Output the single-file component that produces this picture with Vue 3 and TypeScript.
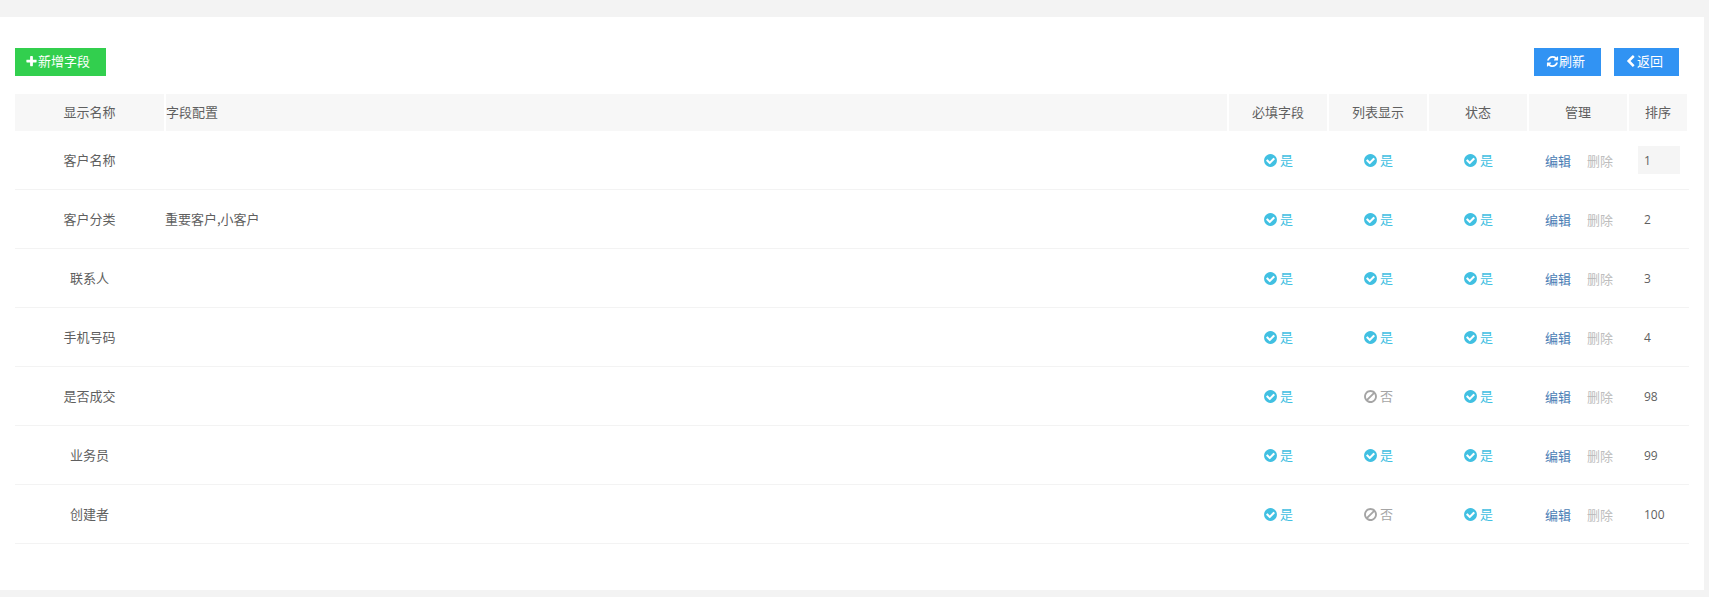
<script setup lang="ts">
interface Field {
  name: string
  config: string
  required: boolean
  listed: boolean
  enabled: boolean
  sort: number
}

const fields: Field[] = [
  { name: '客户名称', config: '', required: true, listed: true, enabled: true, sort: 1 },
  { name: '客户分类', config: '重要客户,小客户', required: true, listed: true, enabled: true, sort: 2 },
  { name: '联系人', config: '', required: true, listed: true, enabled: true, sort: 3 },
  { name: '手机号码', config: '', required: true, listed: true, enabled: true, sort: 4 },
  { name: '是否成交', config: '', required: true, listed: false, enabled: true, sort: 98 },
  { name: '业务员', config: '', required: true, listed: true, enabled: true, sort: 99 },
  { name: '创建者', config: '', required: true, listed: false, enabled: true, sort: 100 },
]

const checkPath =
  'M1412 734q0-28-18-46l-91-90q-19-19-45-19t-45 19l-408 407-226-226q-19-19-45-19t-45 19l-91 90q-18 18-18 46 0 27 18 45l362 362q19 19 45 19 27 0 46-19l543-543q18-18 18-45zm252 162q0 209-103 385.5t-279.5 279.5-385.5 103-385.5-103-279.5-279.5-103-385.5 103-385.5 279.5-279.5 385.5-103 385.5 103 279.5 279.5 103 385.5z'
const banPath =
  'M1440 893q0-161-87-295l-754 753q137 89 297 89 111 0 211.5-43.5t173.5-116.5 116-174.5 43-212.5zm-999 299l755-754q-135-91-300-91-148 0-273 73t-198 199-73 274q0 162 89 299zm1223-299q0 157-61 300t-163.5 246-245 164-298.5 61-298.5-61-245-164-163.5-246-61-300 61-299.5 163.5-245.5 245-164 298.5-61 298.5 61 245 164 163.5 245.5 61 299.5z'

function flags(f: Field) {
  return [f.required, f.listed, f.enabled]
}
</script>

<template>
  <div class="page">
    <div class="card">
      <div class="toolbar">
        <button class="btn green">
          <svg class="ico" viewBox="0 0 1792 1792"><path d="M1600 736v192q0 40-28 68t-68 28h-416v416q0 40-28 68t-68 28h-192q-40 0-68-28t-28-68v-416h-416q-40 0-68-28t-28-68v-192q0-40 28-68t68-28h416v-416q0-40 28-68t68-28h192q40 0 68 28t28 68v416h416q40 0 68 28t28 68z" /></svg>新增字段
        </button>
        <div class="toolbar-right">
          <button class="btn blue refresh">
            <svg class="ico" viewBox="0 0 1792 1792"><path d="M1639 1056q0 5-1 7-64 268-268 434.5t-478 166.5q-146 0-282.5-55t-243.5-157l-129 129q-19 19-45 19t-45-19-19-45v-448q0-26 19-45t45-19h448q26 0 45 19t19 45-19 45l-137 137q71 66 161 102t187 36q134 0 250-65t186-179q11-17 53-117 8-23 30-23h192q13 0 22.5 9.5t9.5 22.5zm25-800v448q0 26-19 45t-45 19h-448q-26 0-45-19t-19-45 19-45l138-138q-148-137-349-137-134 0-250 65t-186 179q-11 17-53 117-8 23-30 23h-199q-13 0-22.5-9.5t-9.5-22.5v-7q65-268 270-434.5t480-166.5q146 0 284 55.5t245 156.5l130-129q19-19 45-19t45 19 19 45z" /></svg>刷新
          </button>
          <button class="btn blue back">
            <svg class="ico" viewBox="0 0 1792 1792"><path d="M1427 301l-531 531 531 531q19 19 19 45t-19 45l-166 166q-19 19-45 19t-45-19l-742-742q-19-19-19-45t19-45l742-742q19-19 45-19t45 19l166 166q19 19 19 45t-19 45z" /></svg>返回
          </button>
        </div>
      </div>

      <div class="row head">
        <div class="th center"><span>显示名称</span></div>
        <div class="th"><span>字段配置</span></div>
        <div class="th center"><span>必填字段</span></div>
        <div class="th center"><span>列表显示</span></div>
        <div class="th center"><span>状态</span></div>
        <div class="th center"><span>管理</span></div>
        <div class="th center"><span>排序</span></div>
      </div>

      <div v-for="(f, i) in fields" :key="f.name" class="row body">
        <div class="td name">{{ f.name }}</div>
        <div class="td config">{{ f.config }}</div>
        <div v-for="(on, j) in flags(f)" :key="j" class="td center">
          <span class="flag" :class="on ? 'yes' : 'no'">
            <svg class="flag-ico" viewBox="0 0 1792 1792"><path :d="on ? checkPath : banPath" /></svg>
            <span class="flag-text">{{ on ? '是' : '否' }}</span>
          </span>
        </div>
        <div class="td actions">
          <a class="edit">编辑</a>
          <a class="del">删除</a>
        </div>
        <div class="td">
          <div class="sort" :class="{ active: i === 0 }">{{ f.sort }}</div>
        </div>
      </div>
    </div>
  </div>
</template>

<style>
html,
body {
  background: #f3f3f3;
}
</style>

<style scoped>
.page {
  box-sizing: border-box;
  height: 597px;
  padding: 17px 5px 7px 0;
  overflow: hidden;
  font-family: "Noto Sans CJK SC", "Open Sans", sans-serif;
  font-size: 13px;
  color: #5f5f5f;
}

.card {
  box-sizing: border-box;
  height: 573px;
  padding: 31px 15px 0;
  background: #fff;
}

.toolbar {
  display: flex;
  justify-content: space-between;
  height: 28px;
  padding-right: 10px;
  margin-bottom: 18px;
}

.toolbar-right {
  display: flex;
  gap: 13px;
}

.btn {
  box-sizing: border-box;
  display: flex;
  align-items: center;
  justify-content: center;
  height: 28px;
  padding: 0 6px 4px 0;
  border: 0;
  font: inherit;
  color: #fff;
}

.green {
  width: 91px;
  background: #32cf4e;
}

.blue {
  background: #3193f3;
}

.refresh {
  width: 67px;
  padding-right: 4px;
}

.back {
  width: 65px;
}

.ico {
  width: 13px;
  height: 13px;
  margin-top: 2px;
  fill: #fff;
}

.row {
  display: grid;
  grid-template-columns: 151px 1063px 100px 100px 100px 100px 60px;
}

.head {
  height: 37px;
}

.th {
  display: flex;
  align-items: center;
  margin-right: 2px;
  padding-bottom: 2px;
  background: #f7f7f7;
}

.th.center {
  justify-content: center;
}

.body {
  box-sizing: border-box;
  height: 59px;
  border-bottom: 1px solid #f3f3f3;
}

.td {
  display: flex;
  align-items: center;
  min-width: 0;
}

.td.center {
  justify-content: center;
  padding-right: 2px;
}

.name {
  justify-content: center;
  padding: 0 2px 2px 0;
}

.config {
  padding-bottom: 2px;
  text-indent: -1px;
}

.flag {
  display: flex;
  align-items: center;
  gap: 2px;
}

.flag-ico {
  width: 15px;
  height: 15px;
}

.flag-text {
  margin-bottom: 2px;
}

.yes {
  color: #41c0e2;
}

.yes .flag-ico {
  fill: #41c0e2;
}

.no {
  color: #a5a5a5;
}

.no .flag-ico {
  fill: #a5a5a5;
}

.actions {
  gap: 16px;
  padding: 1px 0 0 16px;
}

.edit {
  color: #4a7db5;
}

.del {
  color: #bdbdbd;
}

.sort {
  box-sizing: border-box;
  width: 42px;
  height: 28px;
  margin-left: 9px;
  padding-left: 6px;
  line-height: 30px;
  font-family: "Open Sans", sans-serif;
  font-size: 12px;
}

.sort.active {
  background: #f5f5f5;
}
</style>
